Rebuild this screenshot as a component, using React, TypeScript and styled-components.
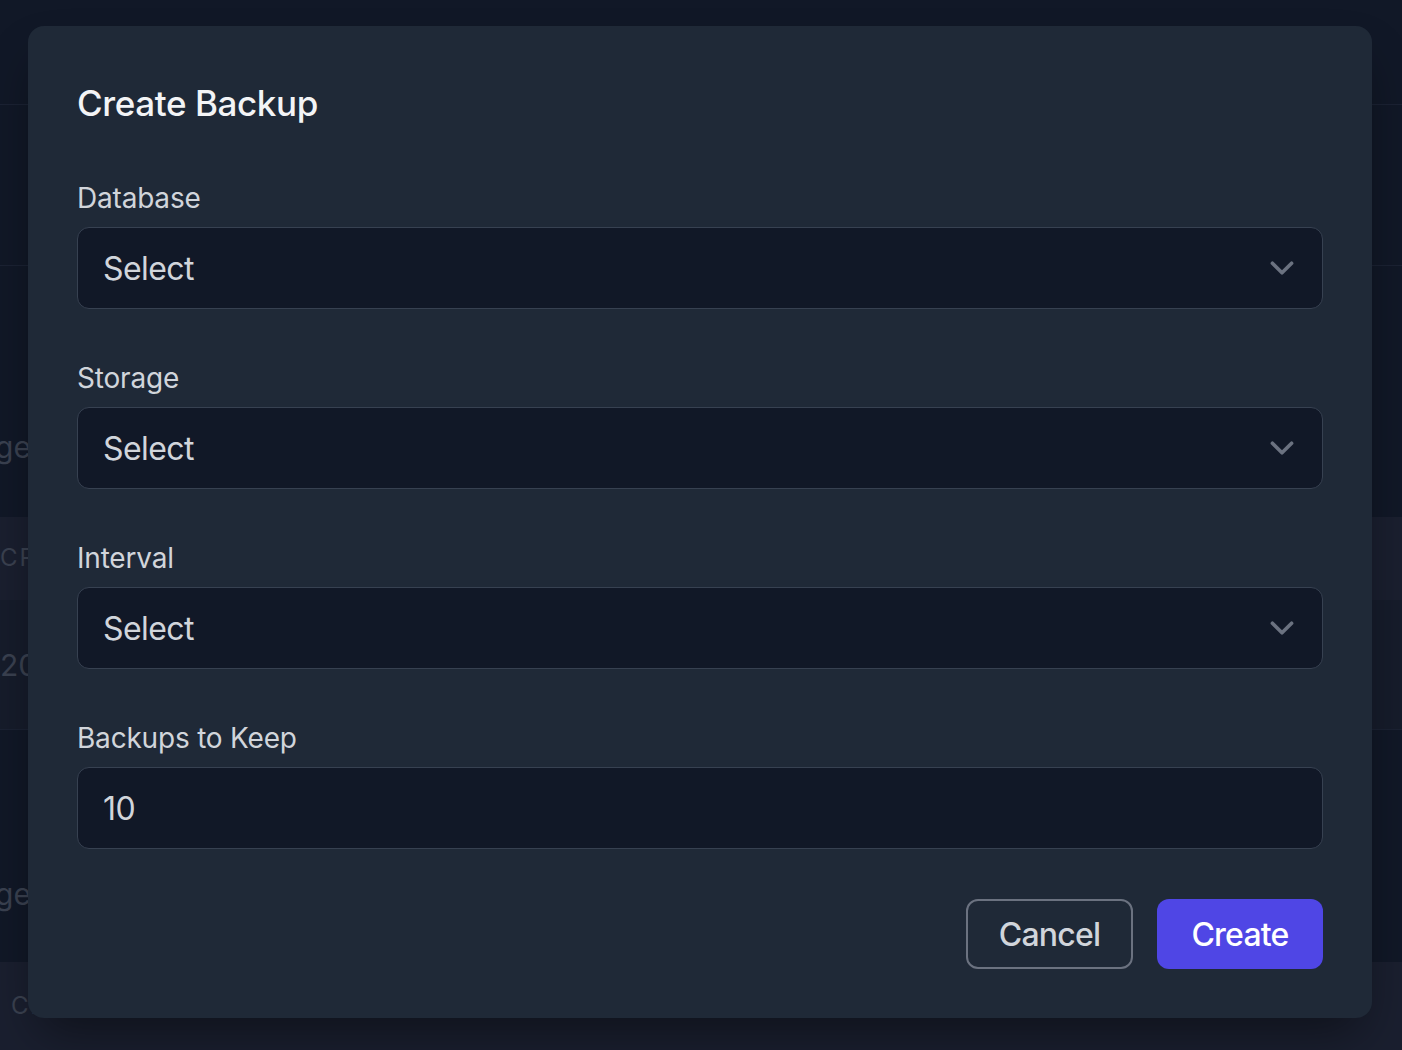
import React from "react";
import styled, { createGlobalStyle } from "styled-components";

const Global = createGlobalStyle`
  html, body { margin: 0; padding: 0; background: #111827; }
  body { font-family: Inter, "Noto Sans", sans-serif; -webkit-font-smoothing: antialiased; }
  * { box-sizing: border-box; }
`;

const Page = styled.div`
  position: relative;
  width: 1402px;
  height: 1050px;
  overflow: hidden;
  background: #111827;
  display: flex;
  flex-direction: column;
`;

const BgRow = styled.div<{ $h: number; $tone?: string; $line?: boolean; $pad?: number }>`
  height: ${(p) => p.$h}px;
  flex-shrink: 0;
  background: ${(p) => p.$tone ?? "#111827"};
  border-bottom: ${(p) => (p.$line ? "1px solid #1b2233" : "none")};
  display: flex;
  align-items: ${(p) => (p.$pad !== undefined ? "flex-start" : "center")};
  padding-top: ${(p) => p.$pad ?? 0}px;
`;

const BgCell = styled.div<{ $w: number; $size?: number; $end?: boolean; $indent?: number }>`
  width: ${(p) => p.$w}px;
  display: flex;
  justify-content: ${(p) => (p.$end ? "flex-end" : "flex-start")};
  padding-left: ${(p) => p.$indent ?? 0}px;
  overflow: hidden;
  white-space: nowrap;
  font-size: ${(p) => p.$size ?? 30}px;
  line-height: 1.2;
  color: #3a4150;
  letter-spacing: ${(p) => ((p.$size ?? 30) < 28 ? "2px" : "0")};
`;

const Overlay = styled.div`
  position: absolute;
  inset: 0;
  display: flex;
  align-items: flex-start;
  justify-content: flex-start;
  padding: 26px 0 0 28px;
`;

const Dialog = styled.div`
  width: 1344px;
  background: #1f2937;
  border-radius: 16px;
  padding: 49px;
  box-shadow: 0 25px 50px -12px rgba(0, 0, 0, 0.45);
`;

const Title = styled.h2`
  margin: 0;
  font-size: 35px;
  line-height: 56px;
  font-weight: 500;
  letter-spacing: -0.4px;
  color: #f3f4f6;
`;

const Form = styled.div`
  margin-top: 47px;
  display: flex;
  flex-direction: column;
  gap: 49px;
`;

const Field = styled.div`
  display: flex;
  flex-direction: column;
`;

const Label = styled.label`
  display: block;
  font-size: 28px;
  line-height: 40px;
  font-weight: 400;
  letter-spacing: -0.2px;
  color: #d1d5db;
  margin-bottom: 9px;
`;

const Control = styled.div`
  height: 82px;
  border: 1px solid #374151;
  border-radius: 12px;
  background: #111827;
  display: flex;
  align-items: center;
  justify-content: space-between;
  padding: 0 16px 0 25px;
  font-size: 32px;
  letter-spacing: -0.6px;
  color: #d1d5db;
`;

const Chevron = styled.svg`
  width: 48px;
  height: 48px;
  flex-shrink: 0;
`;

const Footer = styled.div`
  margin-top: 50px;
  display: flex;
  justify-content: flex-end;
  gap: 24px;
`;

const Button = styled.button<{ $primary?: boolean }>`
  height: 70px;
  width: ${(p) => (p.$primary ? 166 : 167)}px;
  border-radius: 12px;
  font-family: inherit;
  font-size: 32px;
  font-weight: 500;
  letter-spacing: -0.8px;
  cursor: pointer;
  border: ${(p) => (p.$primary ? "none" : "2px solid #6b7280")};
  background: ${(p) => (p.$primary ? "#4f46e5" : "transparent")};
  color: ${(p) => (p.$primary ? "#ffffff" : "#d1d5db")};
  display: flex;
  align-items: center;
  justify-content: center;
`;

const SelectField = ({ label }: { label: string }) => (
  <Field>
    <Label>{label}</Label>
    <Control>
      <span>Select</span>
      <Chevron viewBox="0 0 20 20" fill="none">
        <path d="M6 8l4 4 4-4" stroke="#6b7280" strokeWidth="1.5" strokeLinecap="round" strokeLinejoin="round" />
      </Chevron>
    </Control>
  </Field>
);

export default function App() {
  return (
    <>
      <Global />
      <Page>
        <BgRow $h={105} $line />
        <BgRow $h={161} $line />
        <BgRow $h={251} $pad={163}>
          <BgCell $w={31} $end>Storage</BgCell>
        </BgRow>
        <BgRow $h={83} $tone="#1a1f2f">
          <BgCell $w={60} $size={24}>CREATED</BgCell>
        </BgRow>
        <BgRow $h={130} $tone="#161c2b" $line>
          <BgCell $w={60}>2024</BgCell>
        </BgRow>
        <BgRow $h={232} $pad={146}>
          <BgCell $w={31} $end>Storage</BgCell>
        </BgRow>
        <BgRow $h={88} $tone="#1a1f2f">
          <BgCell $w={60} $size={24} $indent={11}>CREATED</BgCell>
        </BgRow>
        <Overlay>
          <Dialog>
            <Title>Create Backup</Title>
            <Form>
              <SelectField label="Database" />
              <SelectField label="Storage" />
              <SelectField label="Interval" />
              <Field>
                <Label>Backups to Keep</Label>
                <Control>
                  <span>10</span>
                </Control>
              </Field>
            </Form>
            <Footer>
              <Button>Cancel</Button>
              <Button $primary>Create</Button>
            </Footer>
          </Dialog>
        </Overlay>
      </Page>
    </>
  );
}
